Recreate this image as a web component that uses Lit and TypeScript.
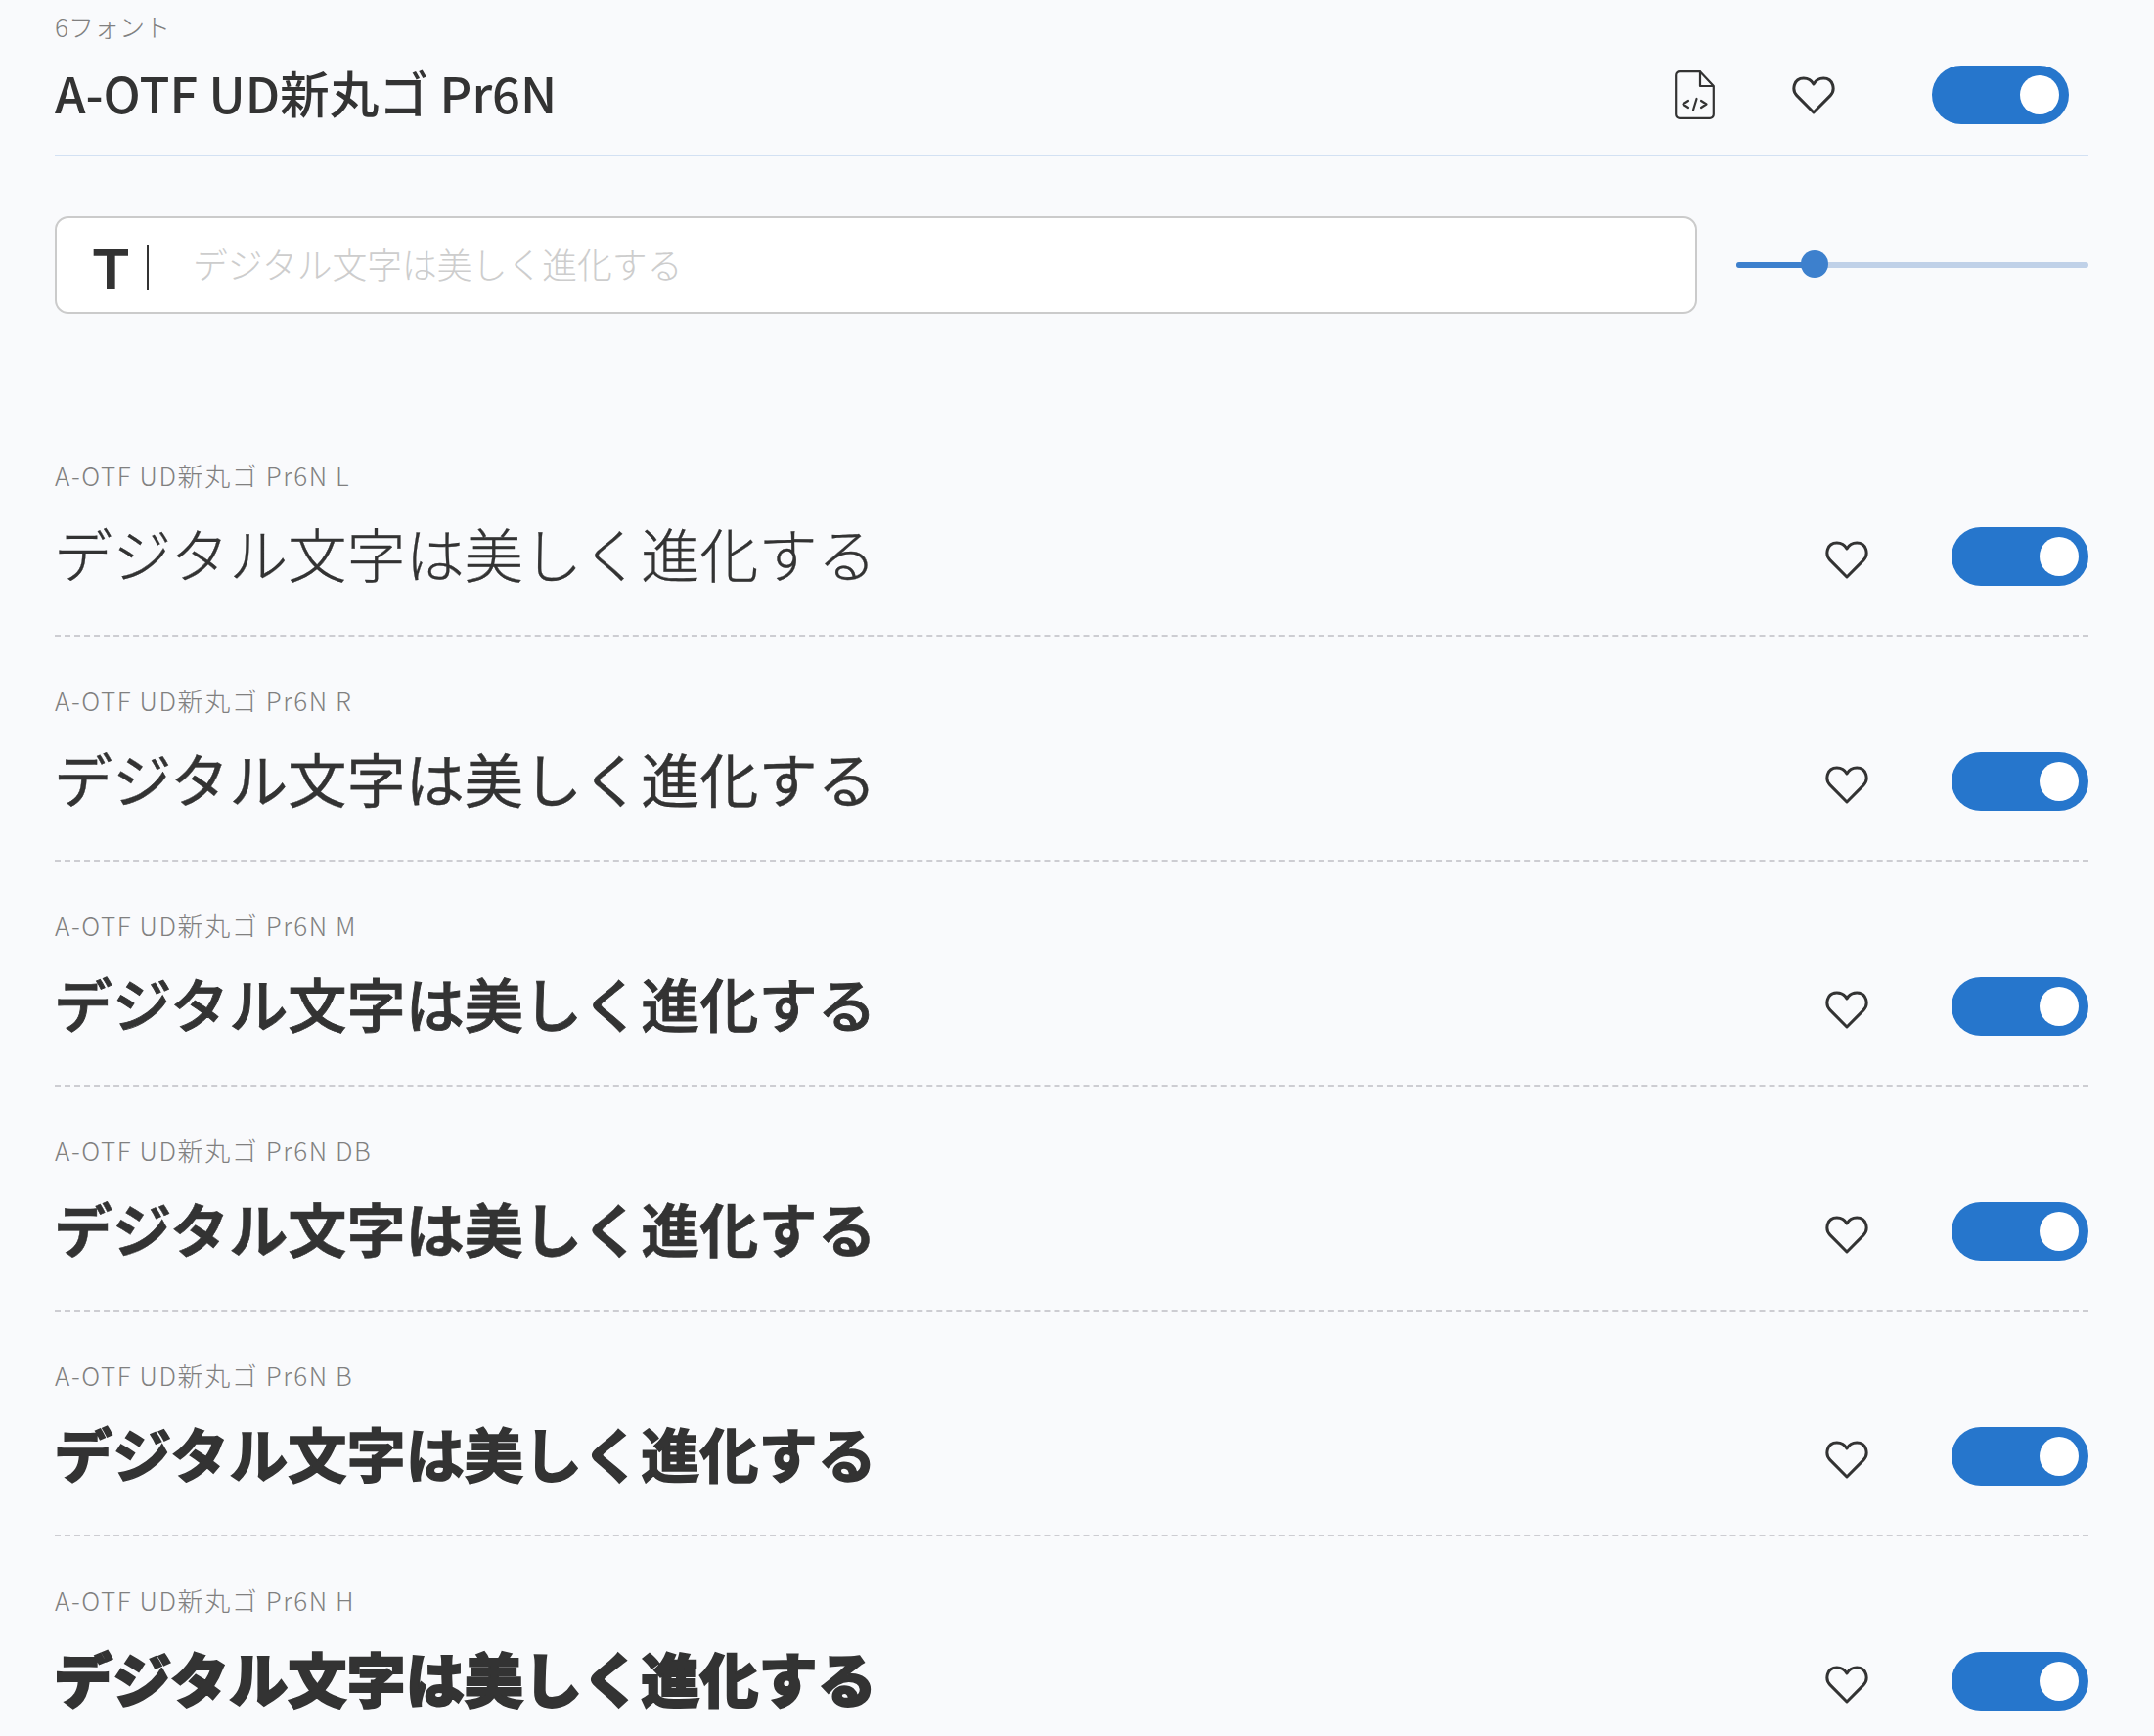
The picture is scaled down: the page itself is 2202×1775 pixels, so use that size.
import { LitElement, html, css, svg } from "lit";
import { customElement } from "lit/decorators.js";

const heart = html`<svg class="heart" viewBox="0 0 44 39" fill="none" stroke="#333" stroke-width="3" stroke-linejoin="round"><path d="M22 37 L4.8 19.6 C-0.5 14 1.5 2 11.8 2 C16.2 2 20 4.4 22 8 C24 4.4 27.8 2 32.2 2 C42.5 2 44.5 14 39.2 19.6 Z"/></svg>`;
const fileIcon = html`<svg class="file" viewBox="0 0 41 50" fill="none" stroke="#333" stroke-width="2.2" stroke-linejoin="round" stroke-linecap="round">${svg`<path d="M26 1.2H5A3.8 3.8 0 0 0 1.2 5V45A3.8 3.8 0 0 0 5 48.8H36A3.8 3.8 0 0 0 39.8 45V16L26 1.2V16H39.8"/><path d="M14 31L8.5 34.5L14 38M22.5 29L19 40.5M27 31L32.5 34.5L27 38"/>`}</svg>`;
const toggle = html`<div class="toggle"><div class="knob"></div></div>`;

const rows = [
  { n: "L", c: "w-l" },
  { n: "R", c: "w-r" },
  { n: "M", c: "w-m" },
  { n: "DB", c: "w-db" },
  { n: "B", c: "w-b" },
  { n: "H", c: "w-h" },
];
const SAMPLE = "デジタル文字は美しく進化する";

@customElement("app-root")
export class AppRoot extends LitElement {
  static styles = css`
    :host {
      display: block;
      height: 1775px;
      overflow: hidden;
      background: #f9fafc;
      color: #333;
      font-family: "Noto Sans CJK JP", "Noto Sans", sans-serif;
    }
    .page { padding: 0 67px 0 56px; }
    .count {
      height: 56px;
      line-height: 54px;
      font-size: 26px;
      font-weight: 300;
      color: #808080;
    }
    .head {
      display: flex;
      align-items: center;
      height: 82px;
      padding: 0 20px 20px 0;
      border-bottom: 2px solid #d3e1f3;
    }
    .title {
      flex: 1;
      font-size: 50.7px;
      font-weight: 500;
      line-height: 82px;
      margin-bottom: 6px;
      white-space: nowrap;
    }
    .file { width: 41px; height: 50px; display: block; }
    .heart { width: 44px; height: 39px; display: block; }
    .head .heart { margin: 0 99px 0 79px; }
    .toggle {
      width: 140px;
      height: 60px;
      border-radius: 30px;
      background: #2676cc;
      display: flex;
      align-items: center;
      justify-content: flex-end;
      padding: 0 10px;
      box-sizing: border-box;
      flex: none;
    }
    .knob { width: 40px; height: 40px; border-radius: 50%; background: #fff; }
    .search {
      display: flex;
      align-items: center;
      gap: 40px;
      margin-top: 61px;
    }
    .box {
      flex: 1;
      height: 100px;
      box-sizing: border-box;
      border: 2px solid #cbcbcb;
      border-radius: 14px;
      background: #fff;
      display: flex;
      align-items: center;
      padding-left: 37px;
    }
    .t {
      font-family: "Liberation Sans", sans-serif;
      font-size: 60px;
      font-weight: 700;
      line-height: 1;
      width: 35px;
      padding-top: 9px;
    }
    .caret { width: 2px; height: 47px; background: #333; margin: 4px 0 0 20px; }
    .ph {
      margin: 0 0 4px 45px;
      font-size: 35.8px;
      font-weight: 300;
      color: #cdcdcd;
      white-space: nowrap;
    }
    .slider {
      width: 360px;
      height: 6px;
      border-radius: 3px;
      background: #c0d1e8;
      position: relative;
      flex: none;
    }
    .fill { width: 80px; height: 6px; border-radius: 3px; background: #3d80cd; }
    .thumb {
      position: absolute;
      left: 66px;
      top: -12px;
      width: 28px;
      height: 28px;
      border-radius: 50%;
      background: #3d80cd;
    }
    .list { margin-top: 100px; }
    .row {
      height: 230px;
      box-sizing: border-box;
      padding-top: 47px;
      border-bottom: 2px dashed #cdcdd2;
    }
    .row:last-child { border-bottom: none; }
    .label {
      height: 36px;
      line-height: 36px;
      font-size: 26px;
      letter-spacing: 1.6px;
      font-weight: 300;
      color: #808080;
      white-space: nowrap;
    }
    .line {
      display: flex;
      align-items: center;
      height: 80px;
      margin-top: 25px;
    }
    .sample {
      flex: 1;
      font-size: 60.15px;
      line-height: 80px;
      margin: 0 0 8px -1px;
      white-space: nowrap;
    }
    .line .heart { margin: 6px 85px 0 0; }
    .w-l { font-weight: 300; -webkit-text-stroke: 0.3px #333; }
    .w-r { font-weight: 400; -webkit-text-stroke: 0.4px #333; }
    .w-m { font-weight: 500; -webkit-text-stroke: 0.9px #333; }
    .w-db { font-weight: 700; -webkit-text-stroke: 0.5px #333; }
    .w-b { font-weight: 700; -webkit-text-stroke: 1.6px #333; }
    .w-h { font-weight: 900; -webkit-text-stroke: 1.8px #333; }
  `;

  render() {
    return html`<div class="page">
      <div class="count">6フォント</div>
      <div class="head">
        <div class="title">A-OTF UD新丸ゴ Pr6N</div>
        ${fileIcon}${heart}${toggle}
      </div>
      <div class="search">
        <div class="box">
          <span class="t">T</span><span class="caret"></span>
          <span class="ph">${SAMPLE}</span>
        </div>
        <div class="slider"><div class="fill"></div><div class="thumb"></div></div>
      </div>
      <div class="list">
        ${rows.map(
          (r) => html`<div class="row">
            <div class="label">A-OTF UD新丸ゴ Pr6N ${r.n}</div>
            <div class="line">
              <div class="sample ${r.c}">${SAMPLE}</div>
              ${heart}${toggle}
            </div>
          </div>`
        )}
      </div>
    </div>`;
  }
}
